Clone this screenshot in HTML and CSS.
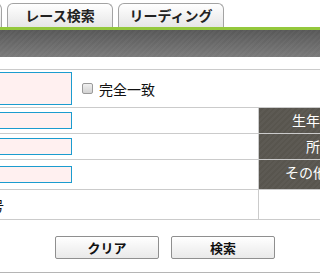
FILE: index.html
```html
<!DOCTYPE html>
<html>
  <head>
    <title>レース検索</title>
    <link rel="stylesheet" href="styles.css">
  </head>
  <body>
    <div class="tabs">
      <div class="tab">出馬表</div>
      <div class="tab">レース検索</div>
      <div class="tab">リーディング</div>
    </div>
    <div class="band"></div>

    <div class="form">
      <div class="row row-1">
        <div class="field">
          <input class="text big" type="text">
          <label class="check"><input type="checkbox"> 完全一致</label>
        </div>
      </div>
      <div class="row row-2">
        <div class="field"><input class="text" type="text"></div>
        <div class="head">生年月日</div>
      </div>
      <div class="row row-3">
        <div class="field"><input class="text" type="text"></div>
        <div class="head">所属</div>
      </div>
      <div class="row row-4">
        <div class="field"><input class="text" type="text"></div>
        <div class="head">その他条件</div>
      </div>
      <div class="row row-5">
        <div class="field"><span class="note">馬番号</span></div>
        <div class="cell"></div>
      </div>
    </div>

    <div class="buttons">
      <button class="btn">クリア</button>
      <button class="btn">検索</button>
    </div>
  </body>
</html>
```

FILE: styles.css
```css
body {
  margin: 0;
  width: 320px;
  height: 277px;
  overflow: hidden;
  font-family: "Noto Sans CJK JP", "Noto Sans", sans-serif;
  background: #fff;
}
.tabs {
  display: flex;
  gap: 5px;
  margin-left: -104px;
  padding-top: 3px;
  height: 24px;
}
.tab {
  flex: 0 0 106px;
  box-sizing: border-box;
  height: 24px;
  border: 1px solid #a3a3a3;
  border-bottom: none;
  border-radius: 6px 6px 0 0;
  background: linear-gradient(#ffffff, #e6e6e6);
  text-align: center;
  font-size: 14px;
  font-weight: bold;
  line-height: 22px;
  color: #222;
}
.band {
  height: 27px;
  border-top: 3px solid #94c83c;
  background:
    repeating-linear-gradient(135deg, rgba(255, 255, 255, 0.03) 0 2px, rgba(0, 0, 0, 0) 2px 4px),
    linear-gradient(#585858, #7a7a7a);
}
.form {
  margin-top: 12px;
  border-top: 1px solid #cbcbcb;
}
.row {
  display: flex;
  border-bottom: 1px solid #cbcbcb;
}
.row-1 { height: 37px; }
.row-2 { height: 25px; }
.row-3 { height: 25px; }
.row-4 { height: 29px; }
.row-5 { height: 29px; }
.field {
  flex: 0 0 258px;
  display: flex;
  align-items: center;
}
.text {
  box-sizing: border-box;
  width: 152px;
  height: 17px;
  margin: 0 0 0 -80px;
  padding: 0;
  border: 1px solid #1b9ccf;
  background: #fff0f0;
}
.big {
  height: 33px;
}
.check {
  display: flex;
  align-items: center;
  margin-left: 10px;
  font-size: 14px;
  color: #111;
}
.check input {
  appearance: none;
  box-sizing: border-box;
  width: 11px;
  height: 11px;
  margin: 0 6px 0 0;
  border: 1px solid #9a9a9a;
  border-radius: 2px;
  background: linear-gradient(#f0f0f0, #d2d2d2);
}
.note {
  margin-left: -38px;
  font-size: 14px;
  color: #111;
}
.head {
  flex: 0 0 122px;
  border-left: 1px solid #cbcbcb;
  background:
    repeating-linear-gradient(135deg, rgba(255, 255, 255, 0.03) 0 2px, rgba(0, 0, 0, 0) 2px 4px),
    #58554e;
  color: #fff;
  font-size: 14px;
  text-align: center;
  line-height: 25px;
}
.cell {
  flex: 0 0 122px;
  border-left: 1px solid #cbcbcb;
}
.buttons {
  display: flex;
  gap: 12px;
  height: 53px;
  padding-left: 55px;
  padding-top: 16px;
  box-sizing: border-box;
  border-bottom: 1px solid #b5b5b5;
}
.btn {
  width: 104px;
  height: 23px;
  border: 1px solid #8f8f8f;
  border-radius: 2px;
  background: linear-gradient(#ffffff, #e9e9e9);
  font-family: "Noto Sans CJK JP", sans-serif;
  font-size: 13px;
  font-weight: bold;
  color: #111;
  padding: 0;
}
```
